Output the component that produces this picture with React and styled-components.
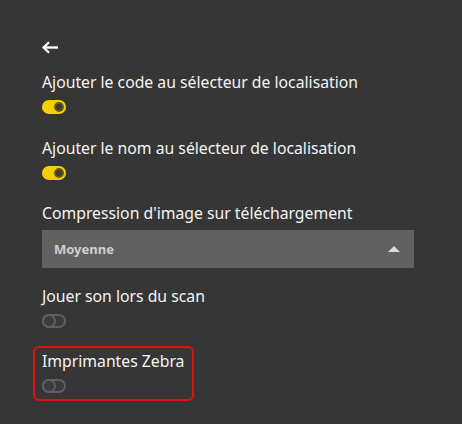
import React from 'react'
import styled, { createGlobalStyle } from 'styled-components'

const Global = createGlobalStyle`
  html, body {
    margin: 0;
    background: #363636;
  }
  body {
    font-family: 'Noto Sans', 'Open Sans', sans-serif;
    color: #f4f4f4;
  }
`

const Page = styled.div`
  width: 462px;
  height: 424px;
  box-sizing: border-box;
  padding: 41px 48px 0 42px;
  display: flex;
  flex-direction: column;
`

const BackButton = styled.button`
  display: block;
  width: 16px;
  height: 13px;
  padding: 0;
  border: none;
  background: none;
  cursor: pointer;
  margin-bottom: 18px;
  svg { display: block; }
`

const Setting = styled.div`
  display: flex;
  flex-direction: column;
  align-items: flex-start;
  margin-bottom: ${p => p.gap || 24}px;
  ${p => p.highlight && `
    width: fit-content;
    margin-left: -9px;
    margin-top: -7px;
    padding: 3px 8px 6px 7px;
    border: 2px solid #e01010;
    border-radius: 6px;
  `}
`

const Label = styled.div`
  font-size: 15.75px;
  line-height: 20px;
  color: #f4f4f4;
`

const Track = styled.div`
  margin-top: 8px;
  width: 24px;
  height: 14px;
  box-sizing: border-box;
  border-radius: 7px;
  position: relative;
  background: ${p => (p.on ? '#f5cf06' : '#3c3c3c')};
  border: ${p => (p.on ? 'none' : '2px solid #5e5e5e')};
`

const Knob = styled.div`
  position: absolute;
  top: ${p => (p.on ? 2 : -2)}px;
  ${p => (p.on ? 'right: 2px;' : 'left: -2px;')}
  width: ${p => (p.on ? 10 : 14)}px;
  height: ${p => (p.on ? 10 : 14)}px;
  box-sizing: border-box;
  border-radius: 50%;
  background: ${p => (p.on ? '#3a3a3a' : '#3c3c3c')};
  border: 2px solid ${p => (p.on ? '#6a5a10' : '#5e5e5e')};
`

const Select = styled.div`
  margin-top: 7px;
  width: 372px;
  height: 38px;
  box-sizing: border-box;
  background: #616161;
  display: flex;
  align-items: center;
  justify-content: space-between;
  padding: 0 14px 0 12px;
  font-family: 'Noto Sans', sans-serif;
  font-weight: 700;
  font-size: 13px;
  color: #cfcfcf;
`

const Caret = styled.span`
  width: 0;
  height: 0;
  border-left: 6px solid transparent;
  border-right: 6px solid transparent;
  border-bottom: 6px solid #d8d8d8;
`

const Toggle = ({ on }) => (
  <Track on={on ? 1 : 0}>
    <Knob on={on ? 1 : 0} />
  </Track>
)

export default function App() {
  return (
    <>
      <Global />
      <Page>
        <BackButton aria-label="Retour">
          <svg width="16" height="13" viewBox="0 0 16 13">
            <polyline points="7,1.2 1.6,6.5 7,11.8" fill="none" stroke="#fff" strokeWidth="2.3" />
            <line x1="2" y1="6.5" x2="16" y2="6.5" stroke="#fff" strokeWidth="2.3" />
          </svg>
        </BackButton>
        <Setting>
          <Label>Ajouter le code au sélecteur de localisation</Label>
          <Toggle on />
        </Setting>
        <Setting gap={23}>
          <Label>Ajouter le nom au sélecteur de localisation</Label>
          <Toggle on />
        </Setting>
        <Setting gap={18}>
          <Label>Compression d'image sur téléchargement</Label>
          <Select>
            <span>Moyenne</span>
            <Caret />
          </Select>
        </Setting>
        <Setting gap={25}>
          <Label>Jouer son lors du scan</Label>
          <Toggle />
        </Setting>
        <Setting highlight>
          <Label>Imprimantes Zebra</Label>
          <Toggle />
        </Setting>
      </Page>
    </>
  )
}
